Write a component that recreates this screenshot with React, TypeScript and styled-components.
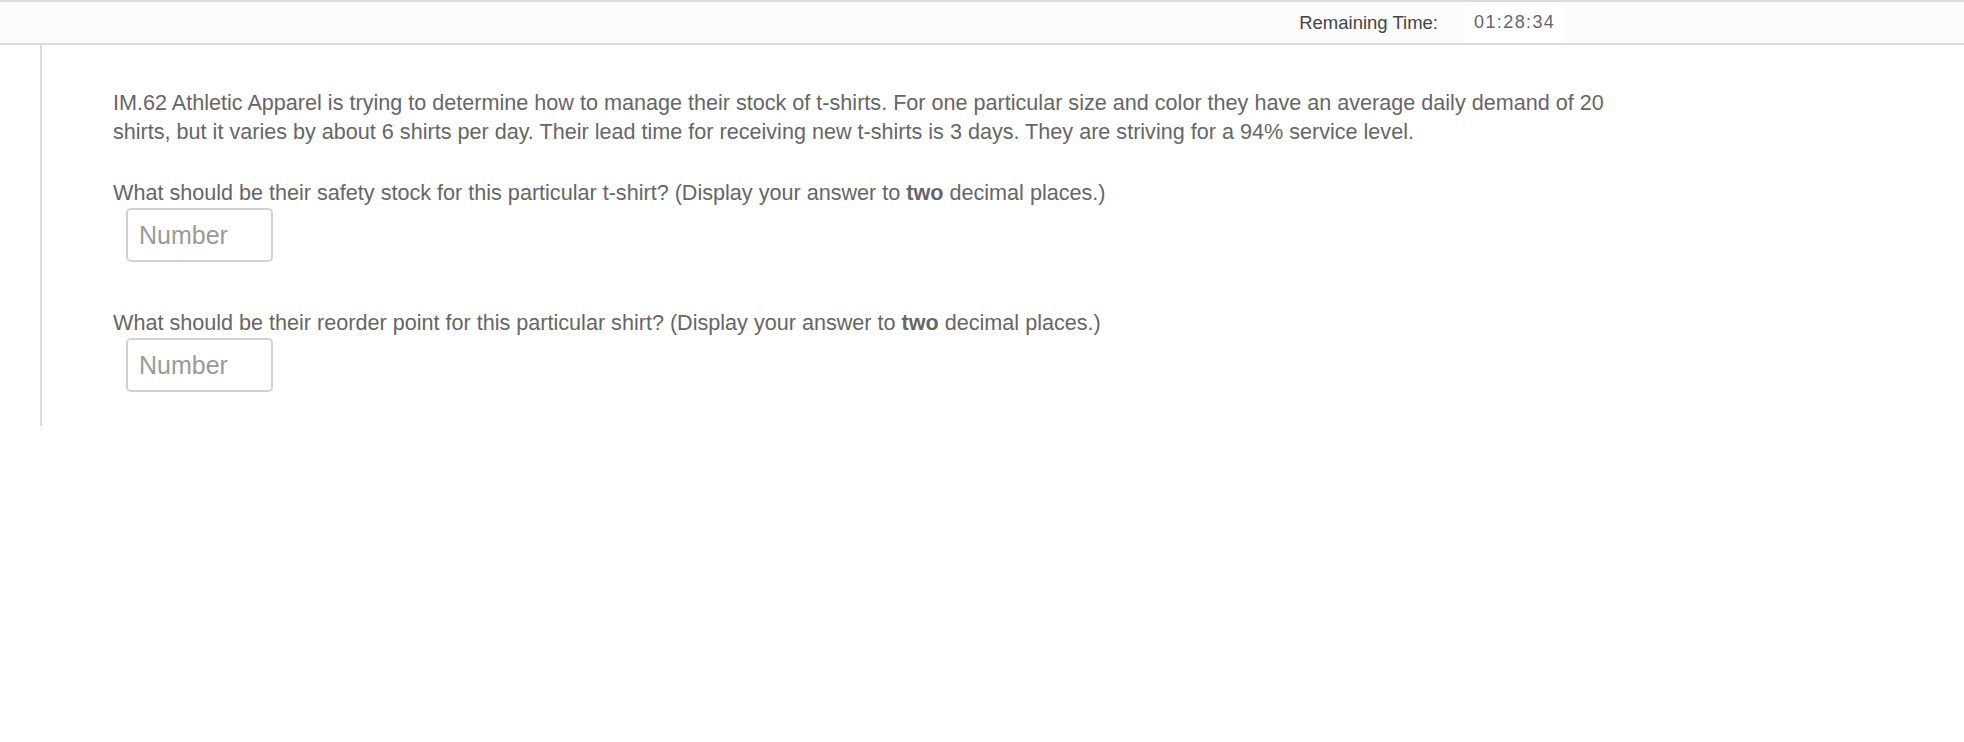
import React from "react";
import styled, { createGlobalStyle } from "styled-components";

const Global = createGlobalStyle`
  html, body { margin: 0; padding: 0; background: #ffffff; }
  body { font-family: "Liberation Sans", Arial, Helvetica, sans-serif; }
  * { box-sizing: border-box; }
`;

const Page = styled.div`
  width: 1964px;
  min-height: 742px;
  background: #ffffff;
`;

const TopBar = styled.header`
  height: 45px;
  border-top: 2px solid #dcdcdc;
  border-bottom: 2px solid #dcdcdc;
  background: #fbfbfb;
  display: flex;
  justify-content: flex-end;
  align-items: stretch;
  padding-right: 399px;
`;

const TimerLabel = styled.span`
  display: flex;
  align-items: center;
  font-size: 18.5px;
  color: #454545;
  padding-right: 27px;
  padding-top: 1px;
`;

const TimerValue = styled.span`
  display: flex;
  align-items: center;
  width: 100px;
  margin: 1px 0 1px;
  padding-left: 9px;
  background: #ffffff;
  font-size: 18px;
  letter-spacing: 1.4px;
  color: #666666;
`;

const Body = styled.div`
  display: flex;
`;

const Gutter = styled.div`
  width: 40px;
  flex: none;
`;

const Content = styled.main`
  border-left: 2px solid #dcdcdc;
  padding: 43px 0 34px 71px;
  width: 1640px;
`;

const Prompt = styled.p`
  margin: 0;
  max-width: 1530px;
  font-size: 21.6px;
  line-height: 29px;
  color: #666666;
`;

const Question = styled.div<{ $gap: number }>`
  margin-top: ${(p) => p.$gap}px;
`;

const QuestionText = styled.p`
  margin: 0;
  font-size: 21.6px;
  line-height: 29px;
  color: #666666;

  b {
    font-weight: bold;
  }
`;

const NumberInput = styled.input`
  display: block;
  margin: 1px 0 0 13px;
  width: 147px;
  height: 54px;
  border: 2px solid #d2d2d2;
  border-radius: 5px;
  padding: 0 0 0 11px;
  font-family: "Liberation Sans", Arial, Helvetica, sans-serif;
  font-size: 25px;
  color: #666666;
  background: #ffffff;
  outline: none;

  &::placeholder {
    color: #9a9a9a;
  }
`;

export default function App() {
  return (
    <Page>
      <Global />
      <TopBar>
        <TimerLabel>Remaining Time:</TimerLabel>
        <TimerValue>01:28:34</TimerValue>
      </TopBar>
      <Body>
        <Gutter />
        <Content>
          <Prompt>
            IM.62 Athletic Apparel is trying to determine how to manage their stock of t-shirts. For one
            particular size and color they have an average daily demand of 20 shirts, but it varies by about 6
            shirts per day. Their lead time for receiving new t-shirts is 3 days. They are striving for a 94%
            service level.
          </Prompt>
          <Question $gap={32}>
            <QuestionText>
              What should be their safety stock for this particular t-shirt? (Display your answer to <b>two</b>{" "}
              decimal places.)
            </QuestionText>
            <NumberInput placeholder="Number" />
          </Question>
          <Question $gap={46}>
            <QuestionText>
              What should be their reorder point for this particular shirt? (Display your answer to <b>two</b>{" "}
              decimal places.)
            </QuestionText>
            <NumberInput placeholder="Number" />
          </Question>
        </Content>
      </Body>
    </Page>
  );
}
